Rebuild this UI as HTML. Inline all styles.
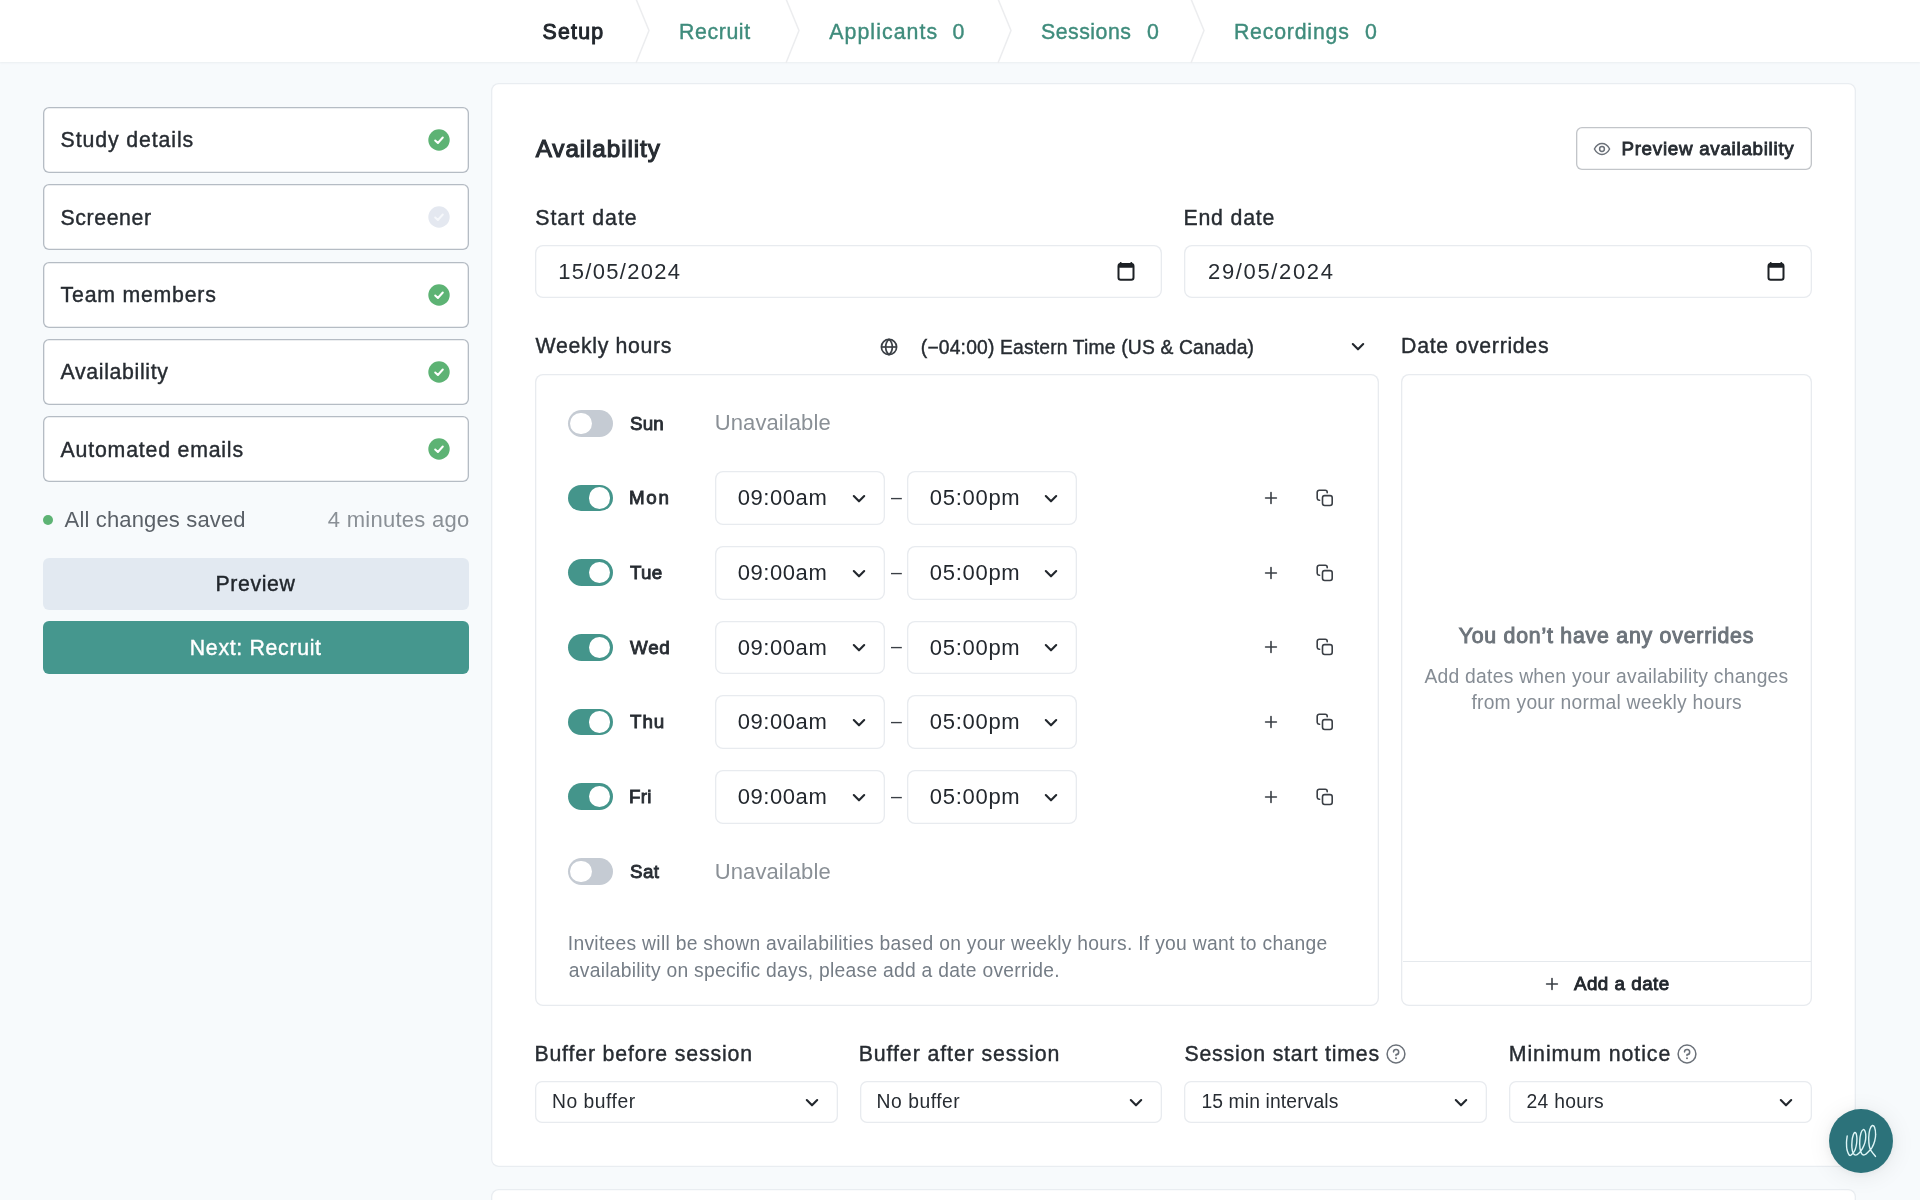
<!DOCTYPE html>
<html lang="en">
<head>
<meta charset="utf-8">
<title>Availability – Study setup</title>
<style>
*{box-sizing:border-box;margin:0;padding:0}
html,body{width:1920px;height:1200px;overflow:hidden}
body{background:#f7fafc;font-family:"Liberation Sans",sans-serif;color:#22272d;position:relative;font-size:22px}
.abs{position:absolute}
.t{position:absolute;white-space:nowrap;line-height:1}
#app{position:absolute;left:0;top:0;width:1920px;height:1200px;overflow:hidden;will-change:transform}
.ic{position:absolute;overflow:visible}
.box,.card,.btn,.si{position:absolute}
nav,aside,main{display:block}
#nav{position:absolute;left:0;top:0;width:1920px;height:62px;background:#fff;box-shadow:0 1px 2px rgba(30,50,70,.06)}
.tg{position:absolute;left:567.8px;width:45.4px;height:26.7px;border-radius:14px;background:#44958b}
.tg b{position:absolute;top:2.7px;left:21.4px;width:21.3px;height:21.3px;border-radius:50%;background:#fff}
.tg.off{background:#c5cbd3}
.tg.off b{left:2.7px}
</style>
</head>
<body>
<div id="app">

<nav id="nav">
<span class="t" style="left:542.6px;top:22px;font-size:21.3px;font-weight:500;-webkit-text-stroke:0.98px;color:#22272d;letter-spacing:1.2px;">Setup</span>
<svg class="ic" style="left:634.00px;top:0.00px" width="18" height="62" viewBox="0 0 18 62"><path d="M2 -1 L15 30.5 L2 63" fill="none" stroke="#ecedef" stroke-width="1.5"/></svg>
<svg class="ic" style="left:784.00px;top:0.00px" width="18" height="62" viewBox="0 0 18 62"><path d="M2 -1 L15 30.5 L2 63" fill="none" stroke="#ecedef" stroke-width="1.5"/></svg>
<svg class="ic" style="left:996.00px;top:0.00px" width="18" height="62" viewBox="0 0 18 62"><path d="M2 -1 L15 30.5 L2 63" fill="none" stroke="#ecedef" stroke-width="1.5"/></svg>
<svg class="ic" style="left:1189.00px;top:0.00px" width="18" height="62" viewBox="0 0 18 62"><path d="M2 -1 L15 30.5 L2 63" fill="none" stroke="#ecedef" stroke-width="1.5"/></svg>
<span class="t" style="left:679.1px;top:22px;font-size:21.3px;font-weight:500;-webkit-text-stroke:0.4px;color:#3f8c7c;letter-spacing:0.59px;">Recruit</span>
<span class="t" style="left:829.2px;top:22px;font-size:21.3px;font-weight:500;-webkit-text-stroke:0.4px;color:#3f8c7c;letter-spacing:1.08px;">Applicants</span>
<span class="t" style="left:952.5px;top:22px;font-size:21.3px;font-weight:500;-webkit-text-stroke:0.4px;color:#3f8c7c;">0</span>
<span class="t" style="left:1040.9px;top:22px;font-size:21.3px;font-weight:500;-webkit-text-stroke:0.4px;color:#3f8c7c;letter-spacing:0.53px;">Sessions</span>
<span class="t" style="left:1146.9px;top:22px;font-size:21.3px;font-weight:500;-webkit-text-stroke:0.4px;color:#3f8c7c;">0</span>
<span class="t" style="left:1233.9px;top:22px;font-size:21.3px;font-weight:500;-webkit-text-stroke:0.4px;color:#3f8c7c;letter-spacing:0.8px;">Recordings</span>
<span class="t" style="left:1364.9px;top:22px;font-size:21.3px;font-weight:500;-webkit-text-stroke:0.4px;color:#3f8c7c;">0</span>
</nav>
<aside>
<div class="si" style="left:43.10px;top:107.10px;width:425.80px;height:65.90px;border-radius:6px;background:#fff;box-shadow:inset 0 0 0 1.33px #b5bcc4;"></div>
<svg class="ic" style="left:428.00px;top:128.90px" width="22" height="22" viewBox="0 0 22 22"><circle cx="11" cy="11" r="10.7" fill="#5db374"/><path d="M7.2 11.5 L9.9 14 L14.8 8.5" fill="none" stroke="#fff" stroke-width="2" stroke-linecap="round" stroke-linejoin="round"/></svg>
<span class="t" style="left:60.6px;top:130px;font-size:21.3px;font-weight:500;-webkit-text-stroke:0.4px;color:#272c32;letter-spacing:0.89px;">Study details</span>
<div class="si" style="left:43.10px;top:184.43px;width:425.80px;height:65.90px;border-radius:6px;background:#fff;box-shadow:inset 0 0 0 1.33px #b5bcc4;"></div>
<svg class="ic" style="left:428.00px;top:206.23px" width="22" height="22" viewBox="0 0 22 22"><circle cx="11" cy="11" r="10.7" fill="#e4e8f0"/><path d="M7.2 11.5 L9.9 14 L14.8 8.5" fill="none" stroke="#f6f8fb" stroke-width="2" stroke-linecap="round" stroke-linejoin="round"/></svg>
<span class="t" style="left:60.6px;top:208px;font-size:21.3px;font-weight:500;-webkit-text-stroke:0.4px;color:#272c32;letter-spacing:0.57px;">Screener</span>
<div class="si" style="left:43.10px;top:261.76px;width:425.80px;height:65.90px;border-radius:6px;background:#fff;box-shadow:inset 0 0 0 1.33px #b5bcc4;"></div>
<svg class="ic" style="left:428.00px;top:283.56px" width="22" height="22" viewBox="0 0 22 22"><circle cx="11" cy="11" r="10.7" fill="#5db374"/><path d="M7.2 11.5 L9.9 14 L14.8 8.5" fill="none" stroke="#fff" stroke-width="2" stroke-linecap="round" stroke-linejoin="round"/></svg>
<span class="t" style="left:60.6px;top:285px;font-size:21.3px;font-weight:500;-webkit-text-stroke:0.4px;color:#272c32;letter-spacing:0.77px;">Team members</span>
<div class="si" style="left:43.10px;top:339.09px;width:425.80px;height:65.90px;border-radius:6px;background:#fff;box-shadow:inset 0 0 0 1.33px #b5bcc4;"></div>
<svg class="ic" style="left:428.00px;top:360.89px" width="22" height="22" viewBox="0 0 22 22"><circle cx="11" cy="11" r="10.7" fill="#5db374"/><path d="M7.2 11.5 L9.9 14 L14.8 8.5" fill="none" stroke="#fff" stroke-width="2" stroke-linecap="round" stroke-linejoin="round"/></svg>
<span class="t" style="left:60.6px;top:362px;font-size:21.3px;font-weight:500;-webkit-text-stroke:0.4px;color:#272c32;letter-spacing:0.64px;">Availability</span>
<div class="si" style="left:43.10px;top:416.42px;width:425.80px;height:65.90px;border-radius:6px;background:#fff;box-shadow:inset 0 0 0 1.33px #b5bcc4;"></div>
<svg class="ic" style="left:428.00px;top:438.22px" width="22" height="22" viewBox="0 0 22 22"><circle cx="11" cy="11" r="10.7" fill="#5db374"/><path d="M7.2 11.5 L9.9 14 L14.8 8.5" fill="none" stroke="#fff" stroke-width="2" stroke-linecap="round" stroke-linejoin="round"/></svg>
<span class="t" style="left:60.6px;top:440px;font-size:21.3px;font-weight:500;-webkit-text-stroke:0.4px;color:#272c32;letter-spacing:0.8px;">Automated emails</span>
<div class="abs" style="left:42.7px;top:514.7px;width:10.7px;height:10.7px;border-radius:50%;background:#5db374"></div>
<span class="t" style="left:64.6px;top:509px;font-size:22px;color:#5a6067;letter-spacing:0.15px;">All changes saved</span>
<span class="t" style="left:327.8px;top:509px;font-size:22px;color:#8a9096;letter-spacing:0.27px;">4 minutes ago</span>
<div class="btn" style="left:43.10px;top:558.20px;width:426.00px;height:52.10px;border-radius:6px;background:#e2e9f1;"></div>
<span class="t" style="left:215.4px;top:574px;font-size:21.3px;font-weight:500;-webkit-text-stroke:0.4px;color:#22272d;letter-spacing:0.64px;">Preview</span>
<div class="btn" style="left:43.10px;top:621.30px;width:426.00px;height:53.00px;border-radius:6px;background:#45978e;"></div>
<span class="t" style="left:189.8px;top:638px;font-size:21.3px;font-weight:500;-webkit-text-stroke:0.4px;color:#fff;letter-spacing:0.68px;">Next: Recruit</span>
</aside>
<main>
<div class="card" style="left:491.00px;top:83.00px;width:1365.00px;height:1084.00px;border-radius:7.5px;background:#fff;box-shadow:inset 0 0 0 1.33px #e9edf1;"></div>
<div class="card" style="left:491.00px;top:1189.00px;width:1365.00px;height:71.00px;border-radius:7.5px;background:#fff;box-shadow:inset 0 0 0 1.33px #e9edf1;"></div>
<span class="t" style="left:535.7px;top:137px;font-size:24.3px;font-weight:500;-webkit-text-stroke:1.12px;color:#272c32;letter-spacing:0.89px;">Availability</span>
<div class="box" style="left:1576.00px;top:127.00px;width:236.00px;height:43.00px;border-radius:6px;background:#fff;box-shadow:inset 0 0 0 1.33px #c2c5c9;"></div>
<svg class="ic" style="left:1592.00px;top:140.70px" width="20" height="16" viewBox="0 0 20 16"><g fill="none" stroke="#6b7179" stroke-width="1.5" stroke-linejoin="round"><path d="M2.4 8 C4.3 4.5 6.9 2.6 10 2.6 C13.1 2.6 15.7 4.5 17.6 8 C15.7 11.5 13.1 13.4 10 13.4 C6.9 13.4 4.3 11.5 2.4 8 Z"/><circle cx="10" cy="8" r="2.4"/></g></svg>
<span class="t" style="left:1621.4px;top:140px;font-size:18.8px;font-weight:500;-webkit-text-stroke:0.86px;color:#272c32;letter-spacing:0.72px;">Preview availability</span>
<span class="t" style="left:535.2px;top:208px;font-size:21.3px;font-weight:500;-webkit-text-stroke:0.4px;color:#272c32;letter-spacing:1.02px;">Start date</span>
<span class="t" style="left:1183.4px;top:208px;font-size:21.3px;font-weight:500;-webkit-text-stroke:0.4px;color:#272c32;letter-spacing:0.82px;">End date</span>
<div class="box" style="left:535.25px;top:245.30px;width:626.65px;height:52.30px;border-radius:8px;background:#fff;box-shadow:inset 0 0 0 1.33px #e8ebef;"></div>
<div class="box" style="left:1184.00px;top:245.30px;width:627.70px;height:52.30px;border-radius:8px;background:#fff;box-shadow:inset 0 0 0 1.33px #e8ebef;"></div>
<span class="t" style="left:558.2px;top:261px;font-size:22px;color:#272c32;letter-spacing:1.3px;">15/05/2024</span>
<span class="t" style="left:1208.1px;top:261px;font-size:22px;color:#272c32;letter-spacing:1.64px;">29/05/2024</span>
<svg class="ic" style="left:1116.10px;top:259.50px" width="20" height="22" viewBox="0 0 20 22"><path d="M4.7 2.9 V4 M15.3 2.9 V4" stroke="#1d2125" stroke-width="2" stroke-linecap="round" fill="none"/><rect x="2.5" y="4.1" width="15" height="15.6" rx="2.2" fill="none" stroke="#1d2125" stroke-width="2"/><rect x="2" y="3.4" width="16" height="4.3" rx="1.6" fill="#1d2125"/></svg>
<svg class="ic" style="left:1765.80px;top:259.50px" width="20" height="22" viewBox="0 0 20 22"><path d="M4.7 2.9 V4 M15.3 2.9 V4" stroke="#1d2125" stroke-width="2" stroke-linecap="round" fill="none"/><rect x="2.5" y="4.1" width="15" height="15.6" rx="2.2" fill="none" stroke="#1d2125" stroke-width="2"/><rect x="2" y="3.4" width="16" height="4.3" rx="1.6" fill="#1d2125"/></svg>
<span class="t" style="left:535.5px;top:336px;font-size:21.3px;font-weight:500;-webkit-text-stroke:0.4px;color:#272c32;letter-spacing:0.67px;">Weekly hours</span>
<svg class="ic" style="left:879.30px;top:336.60px" width="20" height="20" viewBox="0 0 20 20"><g fill="none" stroke="#3a3f45" stroke-width="1.7"><circle cx="10" cy="10" r="7.6"/><path d="M2.4 10 H17.6"/><path d="M10 2.4 C5.6 6 5.6 14 10 17.6 C14.4 14 14.4 6 10 2.4 Z"/></g></svg>
<span class="t" style="left:920.8px;top:338px;font-size:19.3px;font-weight:500;-webkit-text-stroke:0.4px;color:#272c32;letter-spacing:0.17px;">(−04:00) Eastern Time (US &amp; Canada)</span>
<svg class="ic" style="left:1350.30px;top:340.80px" width="16" height="12" viewBox="0 0 16 12"><path d="M2.8 3 L8 8.3 L13.2 3" fill="none" stroke="#22272d" stroke-width="2.1" stroke-linecap="round" stroke-linejoin="round"/></svg>
<span class="t" style="left:1401.1px;top:336px;font-size:21.3px;font-weight:500;-webkit-text-stroke:0.4px;color:#272c32;letter-spacing:0.69px;">Date overrides</span>
<div class="box" style="left:535.25px;top:374.00px;width:843.75px;height:632.00px;border-radius:8px;background:#fff;box-shadow:inset 0 0 0 1.33px #e8ebef;"></div>
<div class="tg off" style="top:409.85px"><b></b></div>
<span class="t" style="left:630.1px;top:415px;font-size:18.8px;font-weight:500;-webkit-text-stroke:0.86px;color:#272c32;letter-spacing:0.1px;">Sun</span>
<span class="t" style="left:714.8px;top:412px;font-size:22px;color:#8a9096;letter-spacing:0.09px;">Unavailable</span>
<div class="tg" style="top:484.52px"><b></b></div>
<span class="t" style="left:629.1px;top:489px;font-size:18.8px;font-weight:500;-webkit-text-stroke:0.86px;color:#272c32;letter-spacing:1.6px;">Mon</span>
<div class="box" style="left:715.30px;top:471.37px;width:169.50px;height:53.60px;border-radius:8px;background:#fff;box-shadow:inset 0 0 0 1.33px #e8ebef;"></div>
<div class="box" style="left:907.30px;top:471.37px;width:169.40px;height:53.60px;border-radius:8px;background:#fff;box-shadow:inset 0 0 0 1.33px #e8ebef;"></div>
<span class="t" style="left:737.8px;top:487px;font-size:22px;color:#22272d;letter-spacing:0.55px;">09:00am</span>
<span class="t" style="left:929.8px;top:487px;font-size:22px;color:#22272d;letter-spacing:0.71px;">05:00pm</span>
<svg class="ic" style="left:850.60px;top:492.97px" width="16" height="12" viewBox="0 0 16 12"><path d="M2.8 3 L8 8.3 L13.2 3" fill="none" stroke="#22272d" stroke-width="2.1" stroke-linecap="round" stroke-linejoin="round"/></svg>
<svg class="ic" style="left:1042.80px;top:492.97px" width="16" height="12" viewBox="0 0 16 12"><path d="M2.8 3 L8 8.3 L13.2 3" fill="none" stroke="#22272d" stroke-width="2.1" stroke-linecap="round" stroke-linejoin="round"/></svg>
<span class="t" style="left:891.0px;top:488px;font-size:19.5px;color:#3a3f45;">–</span>
<svg class="ic" style="left:1263.20px;top:489.87px" width="16" height="16" viewBox="0 0 16 16"><path d="M8 2.6 V13.4 M2.6 8 H13.4" fill="none" stroke="#3a3f45" stroke-width="1.6" stroke-linecap="round"/></svg>
<svg class="ic" style="left:1314.60px;top:487.87px" width="20" height="20" viewBox="0 0 20 20"><rect x="7.5" y="7.6" width="9.7" height="9.9" rx="2.2" fill="none" stroke="#3a3f45" stroke-width="1.6"/><path d="M4.6 12.2 H4.1 A2 2 0 0 1 2.2 10.3 V4.3 A2 2 0 0 1 4.2 2.3 H10.2 A2 2 0 0 1 12.2 4.3 V4.8" fill="none" stroke="#3a3f45" stroke-width="1.6" stroke-linecap="round"/></svg>
<div class="tg" style="top:559.19px"><b></b></div>
<span class="t" style="left:630.1px;top:564px;font-size:18.8px;font-weight:500;-webkit-text-stroke:0.86px;color:#272c32;letter-spacing:0.2px;">Tue</span>
<div class="box" style="left:715.30px;top:546.04px;width:169.50px;height:53.60px;border-radius:8px;background:#fff;box-shadow:inset 0 0 0 1.33px #e8ebef;"></div>
<div class="box" style="left:907.30px;top:546.04px;width:169.40px;height:53.60px;border-radius:8px;background:#fff;box-shadow:inset 0 0 0 1.33px #e8ebef;"></div>
<span class="t" style="left:737.8px;top:562px;font-size:22px;color:#22272d;letter-spacing:0.55px;">09:00am</span>
<span class="t" style="left:929.8px;top:562px;font-size:22px;color:#22272d;letter-spacing:0.71px;">05:00pm</span>
<svg class="ic" style="left:850.60px;top:567.64px" width="16" height="12" viewBox="0 0 16 12"><path d="M2.8 3 L8 8.3 L13.2 3" fill="none" stroke="#22272d" stroke-width="2.1" stroke-linecap="round" stroke-linejoin="round"/></svg>
<svg class="ic" style="left:1042.80px;top:567.64px" width="16" height="12" viewBox="0 0 16 12"><path d="M2.8 3 L8 8.3 L13.2 3" fill="none" stroke="#22272d" stroke-width="2.1" stroke-linecap="round" stroke-linejoin="round"/></svg>
<span class="t" style="left:891.0px;top:563px;font-size:19.5px;color:#3a3f45;">–</span>
<svg class="ic" style="left:1263.20px;top:564.54px" width="16" height="16" viewBox="0 0 16 16"><path d="M8 2.6 V13.4 M2.6 8 H13.4" fill="none" stroke="#3a3f45" stroke-width="1.6" stroke-linecap="round"/></svg>
<svg class="ic" style="left:1314.60px;top:562.54px" width="20" height="20" viewBox="0 0 20 20"><rect x="7.5" y="7.6" width="9.7" height="9.9" rx="2.2" fill="none" stroke="#3a3f45" stroke-width="1.6"/><path d="M4.6 12.2 H4.1 A2 2 0 0 1 2.2 10.3 V4.3 A2 2 0 0 1 4.2 2.3 H10.2 A2 2 0 0 1 12.2 4.3 V4.8" fill="none" stroke="#3a3f45" stroke-width="1.6" stroke-linecap="round"/></svg>
<div class="tg" style="top:633.86px"><b></b></div>
<span class="t" style="left:630.1px;top:639px;font-size:18.8px;font-weight:500;-webkit-text-stroke:0.86px;color:#272c32;letter-spacing:0.65px;">Wed</span>
<div class="box" style="left:715.30px;top:620.71px;width:169.50px;height:53.60px;border-radius:8px;background:#fff;box-shadow:inset 0 0 0 1.33px #e8ebef;"></div>
<div class="box" style="left:907.30px;top:620.71px;width:169.40px;height:53.60px;border-radius:8px;background:#fff;box-shadow:inset 0 0 0 1.33px #e8ebef;"></div>
<span class="t" style="left:737.8px;top:637px;font-size:22px;color:#22272d;letter-spacing:0.55px;">09:00am</span>
<span class="t" style="left:929.8px;top:637px;font-size:22px;color:#22272d;letter-spacing:0.71px;">05:00pm</span>
<svg class="ic" style="left:850.60px;top:642.31px" width="16" height="12" viewBox="0 0 16 12"><path d="M2.8 3 L8 8.3 L13.2 3" fill="none" stroke="#22272d" stroke-width="2.1" stroke-linecap="round" stroke-linejoin="round"/></svg>
<svg class="ic" style="left:1042.80px;top:642.31px" width="16" height="12" viewBox="0 0 16 12"><path d="M2.8 3 L8 8.3 L13.2 3" fill="none" stroke="#22272d" stroke-width="2.1" stroke-linecap="round" stroke-linejoin="round"/></svg>
<span class="t" style="left:891.0px;top:637px;font-size:19.5px;color:#3a3f45;">–</span>
<svg class="ic" style="left:1263.20px;top:639.21px" width="16" height="16" viewBox="0 0 16 16"><path d="M8 2.6 V13.4 M2.6 8 H13.4" fill="none" stroke="#3a3f45" stroke-width="1.6" stroke-linecap="round"/></svg>
<svg class="ic" style="left:1314.60px;top:637.21px" width="20" height="20" viewBox="0 0 20 20"><rect x="7.5" y="7.6" width="9.7" height="9.9" rx="2.2" fill="none" stroke="#3a3f45" stroke-width="1.6"/><path d="M4.6 12.2 H4.1 A2 2 0 0 1 2.2 10.3 V4.3 A2 2 0 0 1 4.2 2.3 H10.2 A2 2 0 0 1 12.2 4.3 V4.8" fill="none" stroke="#3a3f45" stroke-width="1.6" stroke-linecap="round"/></svg>
<div class="tg" style="top:708.53px"><b></b></div>
<span class="t" style="left:630.1px;top:713px;font-size:18.8px;font-weight:500;-webkit-text-stroke:0.86px;color:#272c32;letter-spacing:0.82px;">Thu</span>
<div class="box" style="left:715.30px;top:695.38px;width:169.50px;height:53.60px;border-radius:8px;background:#fff;box-shadow:inset 0 0 0 1.33px #e8ebef;"></div>
<div class="box" style="left:907.30px;top:695.38px;width:169.40px;height:53.60px;border-radius:8px;background:#fff;box-shadow:inset 0 0 0 1.33px #e8ebef;"></div>
<span class="t" style="left:737.8px;top:711px;font-size:22px;color:#22272d;letter-spacing:0.55px;">09:00am</span>
<span class="t" style="left:929.8px;top:711px;font-size:22px;color:#22272d;letter-spacing:0.71px;">05:00pm</span>
<svg class="ic" style="left:850.60px;top:716.98px" width="16" height="12" viewBox="0 0 16 12"><path d="M2.8 3 L8 8.3 L13.2 3" fill="none" stroke="#22272d" stroke-width="2.1" stroke-linecap="round" stroke-linejoin="round"/></svg>
<svg class="ic" style="left:1042.80px;top:716.98px" width="16" height="12" viewBox="0 0 16 12"><path d="M2.8 3 L8 8.3 L13.2 3" fill="none" stroke="#22272d" stroke-width="2.1" stroke-linecap="round" stroke-linejoin="round"/></svg>
<span class="t" style="left:891.0px;top:712px;font-size:19.5px;color:#3a3f45;">–</span>
<svg class="ic" style="left:1263.20px;top:713.88px" width="16" height="16" viewBox="0 0 16 16"><path d="M8 2.6 V13.4 M2.6 8 H13.4" fill="none" stroke="#3a3f45" stroke-width="1.6" stroke-linecap="round"/></svg>
<svg class="ic" style="left:1314.60px;top:711.88px" width="20" height="20" viewBox="0 0 20 20"><rect x="7.5" y="7.6" width="9.7" height="9.9" rx="2.2" fill="none" stroke="#3a3f45" stroke-width="1.6"/><path d="M4.6 12.2 H4.1 A2 2 0 0 1 2.2 10.3 V4.3 A2 2 0 0 1 4.2 2.3 H10.2 A2 2 0 0 1 12.2 4.3 V4.8" fill="none" stroke="#3a3f45" stroke-width="1.6" stroke-linecap="round"/></svg>
<div class="tg" style="top:783.20px"><b></b></div>
<span class="t" style="left:629.1px;top:788px;font-size:18.8px;font-weight:500;-webkit-text-stroke:0.86px;color:#272c32;letter-spacing:0.25px;">Fri</span>
<div class="box" style="left:715.30px;top:770.05px;width:169.50px;height:53.60px;border-radius:8px;background:#fff;box-shadow:inset 0 0 0 1.33px #e8ebef;"></div>
<div class="box" style="left:907.30px;top:770.05px;width:169.40px;height:53.60px;border-radius:8px;background:#fff;box-shadow:inset 0 0 0 1.33px #e8ebef;"></div>
<span class="t" style="left:737.8px;top:786px;font-size:22px;color:#22272d;letter-spacing:0.55px;">09:00am</span>
<span class="t" style="left:929.8px;top:786px;font-size:22px;color:#22272d;letter-spacing:0.71px;">05:00pm</span>
<svg class="ic" style="left:850.60px;top:791.65px" width="16" height="12" viewBox="0 0 16 12"><path d="M2.8 3 L8 8.3 L13.2 3" fill="none" stroke="#22272d" stroke-width="2.1" stroke-linecap="round" stroke-linejoin="round"/></svg>
<svg class="ic" style="left:1042.80px;top:791.65px" width="16" height="12" viewBox="0 0 16 12"><path d="M2.8 3 L8 8.3 L13.2 3" fill="none" stroke="#22272d" stroke-width="2.1" stroke-linecap="round" stroke-linejoin="round"/></svg>
<span class="t" style="left:891.0px;top:787px;font-size:19.5px;color:#3a3f45;">–</span>
<svg class="ic" style="left:1263.20px;top:788.55px" width="16" height="16" viewBox="0 0 16 16"><path d="M8 2.6 V13.4 M2.6 8 H13.4" fill="none" stroke="#3a3f45" stroke-width="1.6" stroke-linecap="round"/></svg>
<svg class="ic" style="left:1314.60px;top:786.55px" width="20" height="20" viewBox="0 0 20 20"><rect x="7.5" y="7.6" width="9.7" height="9.9" rx="2.2" fill="none" stroke="#3a3f45" stroke-width="1.6"/><path d="M4.6 12.2 H4.1 A2 2 0 0 1 2.2 10.3 V4.3 A2 2 0 0 1 4.2 2.3 H10.2 A2 2 0 0 1 12.2 4.3 V4.8" fill="none" stroke="#3a3f45" stroke-width="1.6" stroke-linecap="round"/></svg>
<div class="tg off" style="top:857.87px"><b></b></div>
<span class="t" style="left:630.1px;top:863px;font-size:18.8px;font-weight:500;-webkit-text-stroke:0.86px;color:#272c32;letter-spacing:0.35px;">Sat</span>
<span class="t" style="left:714.8px;top:861px;font-size:22px;color:#8a9096;letter-spacing:0.09px;">Unavailable</span>
<span class="t" style="left:567.8px;top:934px;font-size:19.3px;color:#757d86;letter-spacing:0.28px;">Invitees will be shown availabilities based on your weekly hours. If you want to change</span>
<span class="t" style="left:568.8px;top:961px;font-size:19.3px;color:#757d86;letter-spacing:0.26px;">availability on specific days, please add a date override.</span>
<div class="box" style="left:1401.00px;top:374.00px;width:410.70px;height:632.00px;border-radius:8px;background:#fff;box-shadow:inset 0 0 0 1.33px #e8ebef;"></div>
<div class="abs" style="left:1402.5px;top:961px;width:408px;height:1.33px;background:#e5e9ed"></div>
<span class="t" style="left:1458.7px;top:626px;font-size:21.3px;font-weight:500;-webkit-text-stroke:0.98px;color:#6d747b;letter-spacing:0.77px;">You don’t have any overrides</span>
<span class="t" style="left:1424.4px;top:667px;font-size:19.3px;color:#858c94;letter-spacing:0.26px;">Add dates when your availability changes</span>
<span class="t" style="left:1471.4px;top:693px;font-size:19.3px;color:#858c94;letter-spacing:0.24px;">from your normal weekly hours</span>
<svg class="ic" style="left:1543.70px;top:975.50px" width="16" height="16" viewBox="0 0 16 16"><path d="M8 2.6 V13.4 M2.6 8 H13.4" fill="none" stroke="#3a3f45" stroke-width="1.6" stroke-linecap="round"/></svg>
<span class="t" style="left:1573.9px;top:975px;font-size:18.8px;font-weight:500;-webkit-text-stroke:0.86px;color:#22272d;letter-spacing:0.5px;">Add a date</span>
<span class="t" style="left:534.4px;top:1044px;font-size:21.3px;font-weight:500;-webkit-text-stroke:0.4px;color:#272c32;letter-spacing:0.84px;">Buffer before session</span>
<span class="t" style="left:858.7px;top:1044px;font-size:21.3px;font-weight:500;-webkit-text-stroke:0.4px;color:#272c32;letter-spacing:0.92px;">Buffer after session</span>
<span class="t" style="left:1184.4px;top:1044px;font-size:21.3px;font-weight:500;-webkit-text-stroke:0.4px;color:#272c32;letter-spacing:0.82px;">Session start times</span>
<svg class="ic" style="left:1385.00px;top:1042.80px" width="22" height="22" viewBox="0 0 22 22"><circle cx="11" cy="11" r="8.9" fill="none" stroke="#6b7179" stroke-width="1.5"/><path d="M8.5 8.9 A2.6 2.6 0 1 1 11 11.6 V12.6" fill="none" stroke="#6b7179" stroke-width="1.5" stroke-linecap="round" stroke-linejoin="round"/><circle cx="11" cy="15.3" r="1" fill="#6b7179"/></svg>
<span class="t" style="left:1508.7px;top:1044px;font-size:21.3px;font-weight:500;-webkit-text-stroke:0.4px;color:#272c32;letter-spacing:0.96px;">Minimum notice</span>
<svg class="ic" style="left:1675.50px;top:1042.80px" width="22" height="22" viewBox="0 0 22 22"><circle cx="11" cy="11" r="8.9" fill="none" stroke="#6b7179" stroke-width="1.5"/><path d="M8.5 8.9 A2.6 2.6 0 1 1 11 11.6 V12.6" fill="none" stroke="#6b7179" stroke-width="1.5" stroke-linecap="round" stroke-linejoin="round"/><circle cx="11" cy="15.3" r="1" fill="#6b7179"/></svg>
<div class="box" style="left:535.10px;top:1081.00px;width:302.70px;height:42.00px;border-radius:7px;background:#fff;box-shadow:inset 0 0 0 1.33px #e8ebef;"></div>
<span class="t" style="left:552.1px;top:1092px;font-size:19.3px;color:#272c32;letter-spacing:0.5px;">No buffer</span>
<svg class="ic" style="left:803.90px;top:1096.70px" width="16" height="12" viewBox="0 0 16 12"><path d="M2.8 3 L8 8.3 L13.2 3" fill="none" stroke="#22272d" stroke-width="2.1" stroke-linecap="round" stroke-linejoin="round"/></svg>
<div class="box" style="left:859.50px;top:1081.00px;width:302.70px;height:42.00px;border-radius:7px;background:#fff;box-shadow:inset 0 0 0 1.33px #e8ebef;"></div>
<span class="t" style="left:876.6px;top:1092px;font-size:19.3px;color:#272c32;letter-spacing:0.53px;">No buffer</span>
<svg class="ic" style="left:1128.30px;top:1096.70px" width="16" height="12" viewBox="0 0 16 12"><path d="M2.8 3 L8 8.3 L13.2 3" fill="none" stroke="#22272d" stroke-width="2.1" stroke-linecap="round" stroke-linejoin="round"/></svg>
<div class="box" style="left:1184.10px;top:1081.00px;width:302.70px;height:42.00px;border-radius:7px;background:#fff;box-shadow:inset 0 0 0 1.33px #e8ebef;"></div>
<span class="t" style="left:1201.4px;top:1092px;font-size:19.3px;color:#272c32;letter-spacing:0.13px;">15 min intervals</span>
<svg class="ic" style="left:1452.90px;top:1096.70px" width="16" height="12" viewBox="0 0 16 12"><path d="M2.8 3 L8 8.3 L13.2 3" fill="none" stroke="#22272d" stroke-width="2.1" stroke-linecap="round" stroke-linejoin="round"/></svg>
<div class="box" style="left:1509.10px;top:1081.00px;width:302.70px;height:42.00px;border-radius:7px;background:#fff;box-shadow:inset 0 0 0 1.33px #e8ebef;"></div>
<span class="t" style="left:1526.4px;top:1092px;font-size:19.3px;color:#272c32;letter-spacing:0.33px;">24 hours</span>
<svg class="ic" style="left:1777.90px;top:1096.70px" width="16" height="12" viewBox="0 0 16 12"><path d="M2.8 3 L8 8.3 L13.2 3" fill="none" stroke="#22272d" stroke-width="2.1" stroke-linecap="round" stroke-linejoin="round"/></svg>
</main>
<div class="abs" style="left:1829.3px;top:1109.3px;width:63.8px;height:63.8px;border-radius:50%;background:#2c727a;box-shadow:0 1.3px 8px rgba(0,0,0,.05),0 2.7px 24px rgba(0,0,0,.08)"></div>
<svg class="ic" style="left:1829.30px;top:1109.30px" width="64" height="64" viewBox="0 0 64 64"><path d="M18.2 27.0 C18.1 28.1 17.5 31.1 17.5 33.4 C17.5 35.7 17.5 38.6 18.0 40.8 C18.6 42.9 19.7 45.7 20.6 46.3 C21.5 47.0 22.6 45.7 23.5 44.8 C24.5 43.9 25.4 42.5 26.1 40.8 C26.8 39.1 27.3 36.5 27.6 34.5 C27.9 32.6 27.9 30.7 27.9 29.0 C27.8 27.4 27.5 25.7 27.2 24.8 C26.9 23.9 26.4 23.4 25.9 23.5 C25.4 23.7 24.8 24.5 24.3 25.7 C23.9 27.0 23.3 29.1 23.1 31.2 C22.9 33.4 22.7 36.4 22.9 38.6 C23.1 40.7 23.4 42.8 24.1 44.1 C24.7 45.3 25.8 46.1 26.8 46.1 C27.8 46.1 29.0 45.0 30.1 43.9 C31.2 42.8 32.5 41.4 33.4 39.7 C34.4 37.9 35.4 35.5 36.0 33.4 C36.6 31.4 36.8 29.4 36.8 27.6 C36.8 25.7 36.5 23.6 36.1 22.4 C35.6 21.3 34.8 20.4 34.2 20.6 C33.5 20.8 32.6 22.1 32.0 23.9 C31.5 25.7 30.9 28.7 30.8 31.2 C30.6 33.8 30.7 37.1 31.0 39.3 C31.3 41.5 31.9 43.5 32.6 44.6 C33.3 45.7 34.2 46.1 35.3 45.9 C36.3 45.7 37.7 44.6 38.9 43.3 C40.2 42.1 41.8 40.5 43.0 38.6 C44.1 36.7 45.1 34.2 45.7 32.0 C46.3 29.8 46.7 27.6 46.6 25.4 C46.6 23.1 46.2 20.1 45.6 18.6 C45.1 17.1 44.1 16.2 43.3 16.5 C42.5 16.8 41.4 18.5 40.8 20.6 C40.2 22.7 39.8 26.3 39.7 29.0 C39.7 31.8 39.9 35.0 40.3 37.1 C40.7 39.2 41.2 40.2 42.2 41.9 C43.3 43.6 45.8 46.5 46.5 47.4" fill="none" stroke="#dff6f7" stroke-width="1.4" stroke-linecap="round" stroke-linejoin="round"/></svg>
</div>
</body>
</html>
